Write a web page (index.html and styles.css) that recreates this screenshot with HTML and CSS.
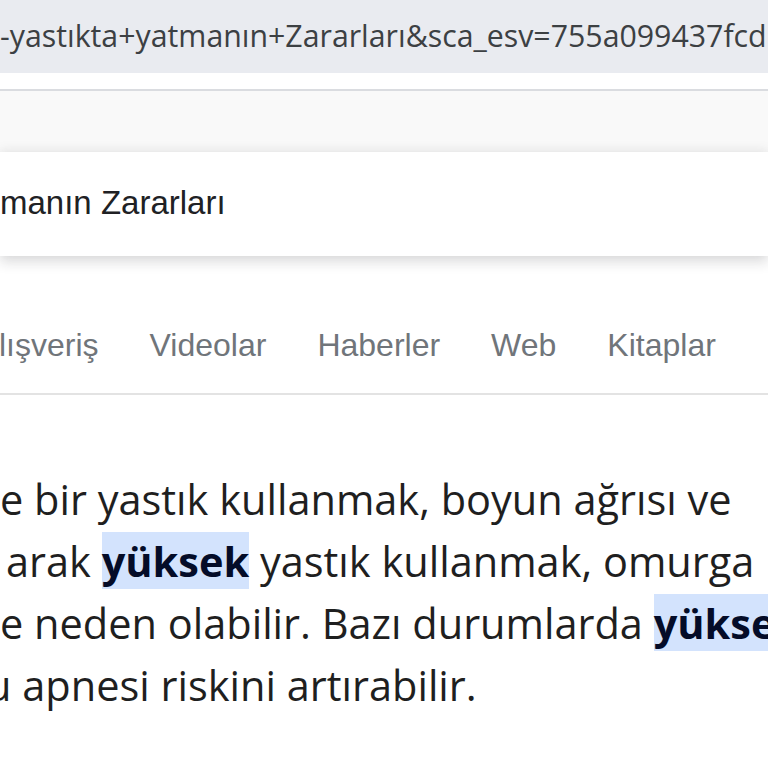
FILE: index.html
```html
<!DOCTYPE html>
<html lang="tr">
<head>
    <meta charset="UTF-8" />
    <meta name="viewport" content="width=device-width, initial-scale=1.0"/>
    <title>Yüksek yastıkta yatmanın Zararları - Google Arama</title>
    <link rel="stylesheet" href="styles.css">
</head>
<body>

<!-- Adres çubuğu -->
<div class="address-bar">
    <span class="address-text">-yastıkta+yatmanın+Zararları&amp;sca_esv=755a099437fcd</span>
</div>
<div class="address-gap"></div>

<!-- Arama kutusu -->
<div class="search-area">
    <div class="search-box">
        <span class="search-text">manın Zararları</span>
    </div>
</div>

<!-- Sekmeler -->
<div class="tabs">
    <span class="tab">lışveriş</span>
    <span class="tab">Videolar</span>
    <span class="tab">Haberler</span>
    <span class="tab">Web</span>
    <span class="tab">Kitaplar</span>
</div>

<!-- Yapay zeka özeti -->
<div class="overview">
    <div class="line">e bir yastık kullanmak, boyun ağrısı ve</div>
    <div class="line line-2">arak <mark class="hl">yüksek</mark> yastık kullanmak, omurga</div>
    <div class="line">e neden olabilir. Bazı durumlarda <mark class="hl">yüksek</mark></div>
    <div class="line line-4">uyku apnesi riskini artırabilir.</div>
</div>

</body>
</html>
```

FILE: styles.css
```css
/* Sayfa */
* {
    box-sizing: border-box;
    margin: 0;
    padding: 0;
}

body {
    width: 768px;
    height: 768px;
    overflow: hidden;
    background: #fff;
    font-family: 'Liberation Sans', Arial, sans-serif;
}

/* Adres çubuğu */
.address-bar {
    height: 73px;
    background: #e9ebf0;
    display: flex;
    align-items: center;
    white-space: nowrap;
    overflow: hidden;
}
.address-text {
    font-family: 'Open Sans', sans-serif;
    font-size: 30.3px;
    color: #3c4043;
    margin-top: -2px;
}
.address-gap {
    height: 18px;
    border-bottom: 2px solid #dadce0;
}

/* Arama kutusu */
.search-area {
    background: #f9f9f9;
    padding-top: 61px;
}
.search-box {
    height: 104px;
    background: #fff;
    display: flex;
    align-items: center;
    box-shadow: 0 6px 12px rgba(32, 33, 36, 0.16), 0 -4px 10px rgba(32, 33, 36, 0.05);
    position: relative;
}
.search-text {
    font-size: 33px;
    color: #202124;
    margin-top: -2px;
}

/* Sekmeler */
.tabs {
    display: flex;
    gap: 51px;
    height: 139px;
    padding-top: 69px;
    margin-left: -1px;
    border-bottom: 2px solid #e3e3e3;
    white-space: nowrap;
    overflow: hidden;
}
.tab {
    font-size: 32px;
    color: #70757a;
    line-height: 40px;
}

/* Özet metni */
.overview {
    padding-top: 73px;
    font-family: 'Open Sans', Roboto, sans-serif;
    font-size: 41.5px;
    line-height: 62px;
    color: #1f1f1f;
    overflow: hidden;
}
.line {
    white-space: nowrap;
}
.line-2 {
    margin-left: 6px;
}
.line-4 {
    margin-left: -82px;
}
.hl {
    background: #d3e3fd;
    color: #040c28;
    font-weight: 700;
    padding: 1px 0 0;
}
```
